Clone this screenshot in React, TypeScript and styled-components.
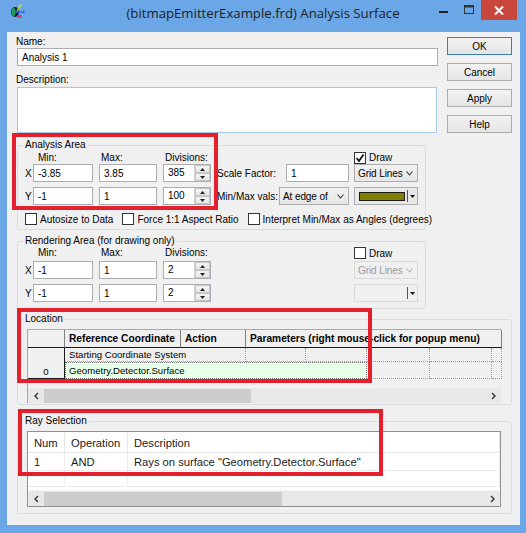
import styled, { createGlobalStyle } from "styled-components";

const GlobalStyle = createGlobalStyle`
  html, body {
    margin: 0;
    padding: 0;
    background: #6ba7e6;
  }
  body {
    font-family: "Liberation Sans", Arial, sans-serif;
    font-size: 10px;
    color: #000;
  }
  * {
    box-sizing: border-box;
  }
`;

const Window = styled.div`
  position: relative;
  width: 526px;
  height: 533px;
  background: #6ba7e6;
  display: flex;
  flex-direction: column;
  overflow: hidden;
`;

const TitleBar = styled.div`
  height: 32px;
  display: grid;
  grid-template-columns: 1fr auto 1fr;
  align-items: start;
`;

const AppIcon = styled.div`
  padding: 3px 0 0 9px;
  height: 20px;
`;

const Title = styled.div`
  font-family: "Open Sans", "Noto Sans", sans-serif;
  font-size: 13.2px;
  line-height: 26px;
  color: #1e1e1e;
  white-space: nowrap;
`;

const Controls = styled.div`
  display: flex;
  justify-content: flex-end;
  padding-right: 9px;
`;

const CtrlButton = styled.div<{ $close?: boolean }>`
  width: ${(p) => (p.$close ? "36px" : "25px")};
  height: 20px;
  display: flex;
  align-items: center;
  justify-content: center;
  background: ${(p) => (p.$close ? "#c9463d" : "transparent")};
`;

const Client = styled.div`
  flex: 1;
  margin: 0 6px 8px 7px;
  background: #f0f0f0;
  padding: 4px 8px 0 10px;
  display: flex;
  flex-direction: column;
`;

const TopSection = styled.div`
  display: grid;
  grid-template-columns: 421px 65px;
  column-gap: 9px;
`;

const FormColumn = styled.div`
  display: flex;
  flex-direction: column;
`;

const Label = styled.div<{ $mt?: number }>`
  line-height: 12px;
  height: 12px;
  margin-top: ${(p) => p.$mt ?? 0}px;
  margin-left: -1px;
  white-space: nowrap;
`;

const TextInput = styled.input<{ $w?: number }>`
  width: ${(p) => (p.$w ? `${p.$w}px` : "100%")};
  height: 18px;
  border: 1px solid #abadb3;
  background: #fff;
  font: inherit;
  font-size: 10px;
  padding: 0 4px;
  margin: 0;
  color: #000;
  outline: none;
`;

const TextArea = styled.div`
  width: 420px;
  height: 46px;
  margin-top: 1px;
  border: 1px solid #a9c6e8;
  background: #fff;
`;

const ButtonColumn = styled.div`
  display: flex;
  flex-direction: column;
  gap: 8px;
  padding-top: 1px;
`;

const Button = styled.div<{ $default?: boolean }>`
  height: 18px;
  border: 1px solid ${(p) => (p.$default ? "#3c7fb1" : "#acacac")};
  background: linear-gradient(#f2f2f2, #e5e5e5);
  display: flex;
  align-items: center;
  justify-content: center;
  font-size: 10px;
`;

const Group = styled.fieldset<{ $w?: number; $mt?: number }>`
  margin: ${(p) => p.$mt ?? 0}px 0 0 0;
  padding: 0;
  min-width: 0;
  width: ${(p) => (p.$w ? `${p.$w}px` : "auto")};
  border: 1px solid #d9dde2;
  border-radius: 3px;
`;

const Legend = styled.legend`
  margin-left: 5px;
  padding: 0 2px;
  line-height: 12px;
  font-size: 10px;
`;

const GroupBody = styled.div<{ $pb?: number }>`
  padding: 0 0 ${(p) => p.$pb ?? 4}px 8px;
`;

const FieldRow = styled.div<{ $h: number; $mt?: number }>`
  display: grid;
  grid-template-columns: 7px 66px 64px 54px 69px 68px 64px;
  align-items: center;
  height: ${(p) => p.$h}px;
  margin-top: ${(p) => p.$mt ?? 0}px;
`;

const Heading = styled.div<{ $indent?: number }>`
  padding-left: ${(p) => p.$indent ?? 0}px;
  line-height: 12px;
  align-self: end;
  white-space: nowrap;
`;

const Axis = styled.div`
  font-size: 10px;
  margin-left: -1px;
`;

const SpanCell = styled.div<{ $span: number }>`
  grid-column: span ${(p) => p.$span};
  display: flex;
  align-items: center;
`;

const InlineLabel = styled.div<{ $w: number }>`
  width: ${(p) => p.$w}px;
  white-space: nowrap;
`;

const SpinBox = styled.div<{ $w: number }>`
  width: ${(p) => p.$w}px;
  height: 18px;
  border: 1px solid #abadb3;
  background: #fff;
  display: flex;
`;

const SpinText = styled.div`
  flex: 1;
  padding-left: 4px;
  line-height: 16px;
`;

const SpinButtons = styled.div`
  width: 16px;
  display: flex;
  flex-direction: column;
  border-left: 1px solid #d4d4d4;
`;

const SpinBtn = styled.div`
  flex: 1;
  background: linear-gradient(#f4f4f4, #e6e6e6);
  border: 1px solid #c6c6c6;
  display: flex;
  align-items: center;
  justify-content: center;
`;

const Combo = styled.div<{ $w: number; $disabled?: boolean }>`
  width: ${(p) => p.$w}px;
  height: 18px;
  border: 1px solid ${(p) => (p.$disabled ? "#d9d9d9" : "#acacac")};
  background: ${(p) =>
    p.$disabled ? "#f0f0f0" : "linear-gradient(#f2f2f2, #e6e6e6)"};
  color: ${(p) => (p.$disabled ? "#9a9a9a" : "#000")};
  display: flex;
  align-items: center;
  padding: 0 4px 0 3px;
  justify-content: space-between;
  white-space: nowrap;
  letter-spacing: -0.1px;
`;

const ColorPick = styled.div<{ $disabled?: boolean }>`
  width: 64px;
  height: 18px;
  border: 1px solid ${(p) => (p.$disabled ? "#d9d9d9" : "#acacac")};
  background: ${(p) => (p.$disabled ? "#f0f0f0" : "#e9e9e9")};
  display: flex;
  align-items: center;
  padding-left: 4px;
`;

const Swatch = styled.div`
  width: 46px;
  height: 9px;
  background: #808000;
  border: 1px solid #1a1a1a;
`;

const PickArrow = styled.div`
  margin-left: auto;
  width: 10px;
  height: 12px;
  border-left: 1px solid #555;
  display: flex;
  align-items: center;
  justify-content: center;
`;

const CheckLabel = styled.label<{ $ml?: number }>`
  display: flex;
  align-items: center;
  gap: 3px;
  margin-left: ${(p) => p.$ml ?? 0}px;
  white-space: nowrap;
`;

const Box = styled.span`
  width: 12px;
  height: 12px;
  border: 1px solid #333;
  background: #fff;
  display: inline-flex;
  align-items: center;
  justify-content: center;
`;

const GridFrame = styled.div`
  margin: 4px 10px 1px 9px;
  height: 74px;
  border: 1px solid #a8a8a8;
  border-right: none;
  border-bottom: none;
  background: #f0f0f0;
  display: flex;
  flex-direction: column;
  font-size: 9.6px;
`;

const DataGrid = styled.div`
  display: grid;
  grid-template-columns: 37px 116px 65px 60px 61px 63px 62px 10px;
  grid-template-rows: 18px 14px 17px;
`;

const HeadCell = styled.div<{ $span?: number }>`
  grid-column: span ${(p) => p.$span ?? 1};
  font-weight: bold;
  border-right: 1px solid #808080;
  border-bottom: 1px solid #1a1a1a;
  padding: 2px 0 0 4px;
  line-height: 13px;
  overflow: hidden;
  white-space: nowrap;
  font-size: 10.2px;
`;

const RowHead = styled.div`
  grid-row: span 2;
  border-right: 1px solid #1a1a1a;
  border-bottom: 1px solid #1a1a1a;
  display: flex;
  align-items: flex-end;
  justify-content: center;
  padding-bottom: 1px;
`;

const Cell = styled.div<{ $span?: number; $active?: boolean }>`
  grid-column: span ${(p) => p.$span ?? 1};
  border-right: 1px dotted #9a9a9a;
  border-bottom: 1px dotted #9a9a9a;
  background: ${(p) => (p.$active ? "#e8ffe8" : "transparent")};
  outline: ${(p) => (p.$active ? "1px dotted #707070" : "none")};
  outline-offset: -1px;
  padding: 0 4px;
  display: flex;
  align-items: center;
  white-space: nowrap;
  overflow: hidden;
`;

const HScroll = styled.div`
  margin-top: auto;
  height: 16px;
  display: flex;
  align-items: center;
  background: #e8e8e8;
  border-top: 1px solid #f4f4f4;
`;

const ScrollArrow = styled.div`
  width: 16px;
  height: 16px;
  display: flex;
  align-items: center;
  justify-content: center;
`;

const ScrollTrack = styled.div`
  flex: 1;
  height: 14px;
  display: flex;
  align-items: stretch;
`;

const Thumb = styled.div`
  background: #cdcdcd;
`;

const ListFrame = styled.div`
  margin: 4px 10px 6px 9px;
  height: 76px;
  border: 1px solid #8e9297;
  background: #fff;
  display: flex;
  flex-direction: column;
  font-family: "Liberation Sans", Arial, sans-serif;
  font-size: 11.2px;
`;

const ListGrid = styled.div`
  display: grid;
  grid-template-columns: 37px 63px 1fr;
  grid-template-rows: 21px 18px 16px;
`;

const ListHead = styled.div`
  border-right: 1px solid #e5e5e5;
  border-bottom: 1px solid #e5e5e5;
  padding-left: 6px;
  display: flex;
  align-items: center;
  padding-top: 1px;
  color: #1a1a1a;
`;

const ListCell = styled.div`
  border-right: 1px solid #ececec;
  border-bottom: 1px solid #ececec;
  padding-left: 6px;
  display: flex;
  align-items: center;
  white-space: nowrap;
  color: #1a1a1a;
`;

const Annotation = styled.div<{
  $x: number;
  $y: number;
  $w: number;
  $h: number;
}>`
  position: absolute;
  left: ${(p) => p.$x}px;
  top: ${(p) => p.$y}px;
  width: ${(p) => p.$w}px;
  height: ${(p) => p.$h}px;
  border: 4px solid #e3202b;
  pointer-events: none;
`;

const Chevron = ({ color = "#333" }: { color?: string }) => (
  <svg width="7" height="5" viewBox="0 0 7 5">
    <polyline points="0.5,0.5 3.5,4 6.5,0.5" fill="none" stroke={color} strokeWidth="1.1" />
  </svg>
);

const Check = ({ checked }: { checked?: boolean }) => (
  <Box>
    {checked && (
      <svg width="10" height="10" viewBox="0 0 10 10">
        <polyline points="1.5,5 4,8 8.5,1.5" fill="none" stroke="#111" strokeWidth="1.8" />
      </svg>
    )}
  </Box>
);

const Spin = ({ value, w }: { value: string; w: number }) => (
  <SpinBox $w={w}>
    <SpinText>{value}</SpinText>
    <SpinButtons>
      <SpinBtn>
        <svg width="5" height="3" viewBox="0 0 5 3">
          <polygon points="0,3 5,3 2.5,0" fill="#222" />
        </svg>
      </SpinBtn>
      <SpinBtn>
        <svg width="5" height="3" viewBox="0 0 5 3">
          <polygon points="0,0 5,0 2.5,3" fill="#222" />
        </svg>
      </SpinBtn>
    </SpinButtons>
  </SpinBox>
);

const ColorPicker = ({ disabled }: { disabled?: boolean }) => (
  <ColorPick $disabled={disabled}>
    {!disabled && <Swatch />}
    <PickArrow>
      <svg width="5" height="3" viewBox="0 0 5 3">
        <polygon points="0,0 5,0 2.5,3" fill="#111" />
      </svg>
    </PickArrow>
  </ColorPick>
);

const Scrollbar = ({ thumb }: { thumb: number }) => (
  <HScroll>
    <ScrollArrow>
      <svg width="5" height="8" viewBox="0 0 5 8">
        <polyline points="4,1 1,4 4,7" fill="none" stroke="#333" strokeWidth="1.4" />
      </svg>
    </ScrollArrow>
    <ScrollTrack>
      <Thumb style={{ width: thumb }} />
    </ScrollTrack>
    <ScrollArrow>
      <svg width="5" height="8" viewBox="0 0 5 8">
        <polyline points="1,1 4,4 1,7" fill="none" stroke="#333" strokeWidth="1.4" />
      </svg>
    </ScrollArrow>
  </HScroll>
);

export default function App() {
  return (
    <Window>
      <GlobalStyle />
      <TitleBar>
        <AppIcon>
          <svg width="16" height="16" viewBox="0 0 16 16">
            <ellipse cx="6" cy="9" rx="4" ry="5" fill="#13203a" />
            <ellipse cx="4.5" cy="9" rx="2" ry="4" fill="#1aa05a" />
            <line x1="6" y1="9" x2="14" y2="9" stroke="#2a6df0" strokeWidth="1.5" />
            <polygon points="14,7 16,9 14,11" fill="#2a6df0" />
            <line x1="8" y1="8" x2="11" y2="3" stroke="#c8d63a" strokeWidth="1.3" />
            <polygon points="9.5,2 13,1 12,4.5" fill="#c8d63a" />
            <rect x="8.5" y="12" width="4" height="3" fill="#d8365a" />
          </svg>
        </AppIcon>
        <Title>(bitmapEmitterExample.frd) Analysis Surface</Title>
        <Controls>
          <CtrlButton>
            <svg width="9" height="9" viewBox="0 0 9 9">
              <rect x="0" y="5" width="9" height="2" fill="#222" />
            </svg>
          </CtrlButton>
          <CtrlButton>
            <svg width="10" height="10" viewBox="0 0 10 10">
              <rect x="0.5" y="0.5" width="9" height="8" fill="none" stroke="#333" />
              <rect x="0.5" y="0.5" width="9" height="2" fill="#333" />
            </svg>
          </CtrlButton>
          <CtrlButton $close>
            <svg width="10" height="9" viewBox="0 0 10 9">
              <path d="M1 0.5 L9 8.5 M9 0.5 L1 8.5" stroke="#fff" strokeWidth="2" />
            </svg>
          </CtrlButton>
        </Controls>
      </TitleBar>

      <Client>
        <TopSection>
          <FormColumn>
            <Label>Name:</Label>
            <TextInput $w={421} readOnly value="Analysis 1" />
            <Label $mt={8}>Description:</Label>
            <TextArea />
          </FormColumn>
          <ButtonColumn>
            <Button $default>OK</Button>
            <Button>Cancel</Button>
            <Button>Apply</Button>
            <Button>Help</Button>
          </ButtonColumn>
        </TopSection>

        <Group $w={409} $mt={6}>
          <Legend>Analysis Area</Legend>
          <GroupBody $pb={4}>
            <FieldRow $h={13}>
              <span />
              <Heading $indent={5}>Min:</Heading>
              <Heading $indent={2}>Max:</Heading>
              <Heading $indent={2}>Divisions:</Heading>
              <span />
              <span />
              <CheckLabel>
                <Check checked />
                Draw
              </CheckLabel>
            </FieldRow>
            <FieldRow $h={18}>
              <Axis>X</Axis>
              <TextInput $w={60} readOnly value="-3.85" />
              <TextInput $w={58} readOnly value="3.85" />
              <Spin value="385" w={48} />
              <InlineLabel $w={69}>Scale Factor:</InlineLabel>
              <TextInput $w={63} readOnly value="1" />
              <Combo $w={64}>
                Grid Lines
                <Chevron />
              </Combo>
            </FieldRow>
            <FieldRow $h={18} $mt={5}>
              <Axis>Y</Axis>
              <TextInput $w={60} readOnly value="-1" />
              <TextInput $w={58} readOnly value="1" />
              <Spin value="100" w={48} />
              <SpanCell $span={2}>
                <InlineLabel $w={62}>Min/Max vals:</InlineLabel>
                <Combo $w={70}>
                  At edge of
                  <Chevron />
                </Combo>
              </SpanCell>
              <ColorPicker />
            </FieldRow>
            <FieldRow $h={12} $mt={8}>
              <SpanCell $span={7}>
                <CheckLabel $ml={-1}>
                  <Check />
                  Autosize to Data
                </CheckLabel>
                <CheckLabel $ml={9}>
                  <Check />
                  Force 1:1 Aspect Ratio
                </CheckLabel>
                <CheckLabel $ml={9}>
                  <Check />
                  Interpret Min/Max as Angles (degrees)
                </CheckLabel>
              </SpanCell>
            </FieldRow>
          </GroupBody>
        </Group>

        <Group $w={409} $mt={5}>
          <Legend>Rendering Area (for drawing only)</Legend>
          <GroupBody $pb={6}>
            <FieldRow $h={12}>
              <span />
              <Heading $indent={5}>Min:</Heading>
              <Heading $indent={2}>Max:</Heading>
              <Heading $indent={2}>Divisions:</Heading>
              <span />
              <span />
              <CheckLabel>
                <Check />
                Draw
              </CheckLabel>
            </FieldRow>
            <FieldRow $h={18} $mt={2}>
              <Axis>X</Axis>
              <TextInput $w={60} readOnly value="-1" />
              <TextInput $w={58} readOnly value="1" />
              <Spin value="2" w={48} />
              <span />
              <span />
              <Combo $w={64} $disabled>
                Grid Lines
                <Chevron color="#b0b0b0" />
              </Combo>
            </FieldRow>
            <FieldRow $h={18} $mt={5}>
              <Axis>Y</Axis>
              <TextInput $w={60} readOnly value="-1" />
              <TextInput $w={58} readOnly value="1" />
              <Spin value="2" w={48} />
              <span />
              <span />
              <ColorPicker disabled />
            </FieldRow>
          </GroupBody>
        </Group>

        <Group $mt={4}>
          <Legend>Location</Legend>
          <GridFrame>
            <DataGrid>
              <HeadCell />
              <HeadCell>Reference Coordinate</HeadCell>
              <HeadCell>Action</HeadCell>
              <HeadCell $span={5}>
                Parameters (right mouse-click for popup menu)
              </HeadCell>
              <RowHead>0</RowHead>
              <Cell $span={2}>Starting Coordinate System</Cell>
              <Cell />
              <Cell />
              <Cell />
              <Cell />
              <Cell />
              <Cell $span={4} $active>
                Geometry.Detector.Surface
              </Cell>
              <Cell />
              <Cell />
              <Cell />
            </DataGrid>
            <Scrollbar thumb={207} />
          </GridFrame>
        </Group>

        <Group $mt={10}>
          <Legend>Ray Selection</Legend>
          <ListFrame>
            <ListGrid>
              <ListHead>Num</ListHead>
              <ListHead>Operation</ListHead>
              <ListHead>Description</ListHead>
              <ListCell>1</ListCell>
              <ListCell>AND</ListCell>
              <ListCell>Rays on surface "Geometry.Detector.Surface"</ListCell>
              <ListCell />
              <ListCell />
              <ListCell />
            </ListGrid>
            <Scrollbar thumb={238} />
          </ListFrame>
        </Group>
      </Client>

      <Annotation $x={12} $y={133} $w={206} $h={77} />
      <Annotation $x={17} $y={308} $w={355} $h={75} />
      <Annotation $x={18} $y={409} $w={365} $h={67} />
    </Window>
  );
}
